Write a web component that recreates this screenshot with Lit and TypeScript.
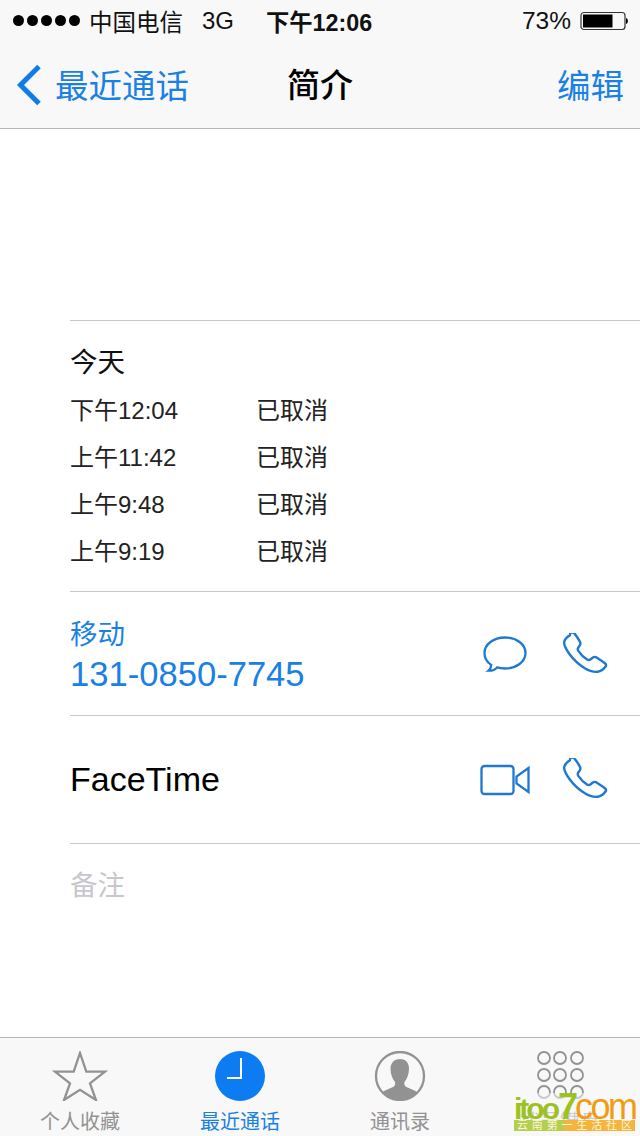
import { LitElement, html, css, svg } from "lit";
import { customElement } from "lit/decorators.js";

const phoneIcon = svg`<path d="M8.500 2.200C6 3.600 3.600 6 3.100 8.600c-.5 3 2 7.300 5 11.500 3.800 5.200 9.200 10.300 14.700 13.600 4 2.400 9.200 3.700 12.300 3.300 2.700-.4 5.700-2.400 7.400-4.700.9-1.200.6-2.500-.4-3.400-2.600-2.100-5.400-3.900-8.100-5.600-1.400-.8-2.600-.6-3.700.3l-2.200 1.700c-1 .7-2.100.7-3.200 0-3.100-2-6.100-5.100-8.300-8.300-.7-1.100-.7-2.200 0-3.200l1.400-2c.8-1.200.8-2.300.1-3.600-1.600-3-3.400-5.700-5.500-8.100-.9-.9-1.900-1-3.700-.1z"/>`;

@customElement("app-root")
export class AppRoot extends LitElement {
  static styles = css`
    :host {
      display: flex;
      flex-direction: column;
      position: relative;
      width: 640px;
      height: 1136px;
      overflow: hidden;
      background: #fff;
      color: #000;
      font-family: "Liberation Sans", "Noto Sans CJK SC", sans-serif;
    }
    svg { display: block; fill: none; }
    .header {
      height: 128px;
      flex: none;
      background: #f8f8f8;
      border-bottom: 1px solid #b4b4b6;
    }
    .status {
      display: flex;
      align-items: center;
      height: 41px;
      padding: 0 11px 0 13px;
      font-size: 24px;
      color: #111;
    }
    .dots { display: flex; gap: 3px; margin-right: 9px; }
    .dots i { width: 11px; height: 11px; border-radius: 50%; background: #000; }
    .carrier { width: 113px; font-size: 23.500px; }
    .net { width: 64px; }
    .clock { font-weight: 700; font-size: 23.300px; }
    .batt-wrap { margin-left: auto; display: flex; align-items: center; gap: 9px; }
    .pct { font-size: 24.500px; }
    .nav {
      display: grid;
      grid-template-columns: 1fr auto 1fr;
      align-items: center;
      height: 84px;
      padding: 0 16px;
      font-size: 33.500px;
      color: #1a80e4;
    }
    .back { display: flex; align-items: center; gap: 13px; }
    .back svg { margin-top: 4px; }
    .title { color: #000; font-weight: 500; font-size: 33px; }
    .edit { justify-self: end; }
    .content { flex: 1; display: flex; flex-direction: column; padding: 191px 0 0 70px; min-height: 0; }
    .section { border-top: 1px solid #c8c7cc; }
    .recents { height: 250px; padding-top: 20px; }
    .today { font-size: 27.500px; height: 44px; line-height: 44px; color: #111; }
    .call {
      display: grid;
      grid-template-columns: 186px auto;
      height: 47px;
      align-items: center;
      font-size: 24px;
      color: #222;
    }
    .row {
      display: flex;
      align-items: center;
      justify-content: space-between;
      padding-right: 32px;
    }
    .mobile { height: 120px; padding-top: 3px; }
    .mobile-text { padding-top: 2px; }
    .ft { height: 127px; font-size: 34px; }
    .lbl { font-size: 27.500px; color: #1a80e4; line-height: 36px; }
    .num { font-size: 34.600px; color: #1a80e4; line-height: 42px; }
    .actions { display: flex; align-items: center; }
    .actions svg { stroke: #1f78d1; stroke-width: 2.300; }
    .phone { margin-left: 32px; }
    .phone.after-bubble { margin-left: 34px; }
    .notes { flex: 1; font-size: 27.500px; color: #c7c7cc; padding-top: 19px; }
    .tabs {
      flex: none;
      height: 98px;
      display: grid;
      grid-template-columns: repeat(4, 160px);
      background: #f8f8f8;
      border-top: 1px solid #b4b4b6;
    }
    .tab {
      display: flex;
      flex-direction: column;
      align-items: center;
      padding-top: 13px;
      font-size: 20px;
      line-height: 24px;
      color: #929292;
      gap: 9px;
    }
    .tab svg { height: 50px; width: 56px; }
    .tab.on { color: #1a80e4; }
    .mark {
      position: absolute;
      left: 514px;
      top: 1093px;
      width: 121px;
      height: 38px;
    }
    .word {
      display: flex;
      align-items: baseline;
      height: 27px;
      line-height: 27px;
      background: rgba(248, 248, 248, 0.55);
    }
    .g { color: #9cc221; font-size: 30px; font-weight: 700; letter-spacing: -3px; }
    .g b { font-size: 36px; margin-left: 1px; }
    .o { color: #f29b0f; font-size: 36px; letter-spacing: -2.500px; }
    .band {
      display: flex;
      justify-content: space-between;
      height: 11px;
      padding: 0 3px;
      background: linear-gradient(90deg, #b4cf4c 0 41%, #f5b53d 41%);
      color: #fdf6dc;
      font-size: 11px;
      line-height: 11px;
    }
  `;

  render() {
    const calls = [
      ["下午12:04", "已取消"],
      ["上午11:42", "已取消"],
      ["上午9:48", "已取消"],
      ["上午9:19", "已取消"],
    ];
    return html`
      <div class="header">
        <div class="status">
          <div class="dots"><i></i><i></i><i></i><i></i><i></i></div>
          <span class="carrier">中国电信</span>
          <span class="net">3G</span>
          <span class="clock">下午12:06</span>
          <div class="batt-wrap">
            <span class="pct">73%</span>
            <svg width="49" height="20" viewBox="0 0 49 20">
              <rect x="1" y="1.500" width="44" height="17" rx="3" fill="none" stroke="#333" stroke-width="1.200"/>
              <rect x="3" y="3.500" width="29.500" height="13" fill="#000"/>
              <path d="M46 7c2.500 .5 2.500 5.500 0 6z" fill="#000"/>
            </svg>
          </div>
        </div>
        <div class="nav">
          <div class="back">
            <svg width="26" height="42" viewBox="0 0 26 42">
              <path d="M23 2.500 4.500 21 23 39.500" stroke="#0f7ce8" stroke-width="5"/>
            </svg>
            <span>最近通话</span>
          </div>
          <div class="title">简介</div>
          <div class="edit">编辑</div>
        </div>
      </div>

      <div class="content">
        <div class="section recents">
          <div class="today">今天</div>
          ${calls.map(
            ([t, s]) => html`<div class="call"><span>${t}</span><span>${s}</span></div>`
          )}
        </div>
        <div class="section row mobile">
          <div class="mobile-text">
            <div class="lbl">移动</div>
            <div class="num">131-0850-7745</div>
          </div>
          <div class="actions">
            <svg width="46" height="40" viewBox="0 0 46 40">
              <path d="M23 2.500c11.500 0 20.500 6.800 20.500 15.500S34.500 33.500 23 33.500c-2.800 0-5.400-.4-7.800-1.100-2 2.200-5.400 3.400-8.700 3.300 1.700-1.400 2.600-3.300 2.700-5.800C5 27.200 2.500 23 2.500 18 2.500 9.300 11.500 2.500 23 2.500z"/>
            </svg>
            <svg class="phone after-bubble" width="46" height="44" viewBox="1 0 44 42">${phoneIcon}</svg>
          </div>
        </div>
        <div class="section row ft">
          <div>FaceTime</div>
          <div class="actions">
            <svg width="50" height="32" viewBox="0 0 50 32">
              <rect x="1.500" y="2" width="32" height="28" rx="3"/>
              <path d="M48.500 4 36.500 12.500v7l12 8.500z"/>
            </svg>
            <svg class="phone" width="46" height="44" viewBox="1 0 44 42">${phoneIcon}</svg>
          </div>
        </div>
        <div class="section notes">备注</div>
      </div>

      <div class="tabs">
        <div class="tab">
          <svg viewBox="0 0 56 50">
            <path d="M28 2l6.300 18.700H53L38 32.300 44 49 28 38.800 12 49l6-16.700L3 20.700h18.700z" stroke="#929292" stroke-width="2.300"/>
          </svg>
          <span>个人收藏</span>
        </div>
        <div class="tab on">
          <svg viewBox="0 0 56 50">
            <circle cx="28" cy="25" r="25" fill="#0d7cf2"/>
            <path d="M29 7v20H15" stroke="#fff" stroke-width="2"/>
          </svg>
          <span>最近通话</span>
        </div>
        <div class="tab">
          <svg viewBox="0 0 56 50">
            <defs><clipPath id="c"><circle cx="28" cy="25" r="23.500"/></clipPath></defs>
            <path clip-path="url(#c)" fill="#929292" d="M28 8c6 0 9 4 9 10 0 5-2 10-4.500 13-.5 2 0 4 2 5l9 4c2 1 3 4 3 10H9c0-6 1-9 3-10l9-4c2-1 2.500-3 2-5-2.500-3-4.500-8-4.500-13 0-6 3.500-10 9.500-10z"/>
            <circle cx="28" cy="25" r="24" stroke="#929292" stroke-width="2.300"/>
          </svg>
          <span>通讯录</span>
        </div>
        <div class="tab">
          <svg viewBox="0 0 56 50" stroke="#929292" stroke-width="1.800">
            <circle cx="12" cy="7" r="6"/><circle cx="28" cy="7" r="6"/><circle cx="45" cy="7" r="6"/>
            <circle cx="12" cy="24" r="6"/><circle cx="28" cy="24" r="6"/><circle cx="45" cy="24" r="6"/>
            <circle cx="12" cy="41" r="6"/><circle cx="28" cy="41" r="6"/><circle cx="45" cy="41" r="6"/>
          </svg>
          <span>拨号键盘</span>
        </div>
      </div>

      <div class="mark">
        <div class="word"><span class="g">itoo<b>7</b></span><span class="o">com</span></div>
        <div class="band"><span>云</span><span>南</span><span>第</span><span>一</span><span>生</span><span>活</span><span>社</span><span>区</span></div>
      </div>
    `;
  }
}
